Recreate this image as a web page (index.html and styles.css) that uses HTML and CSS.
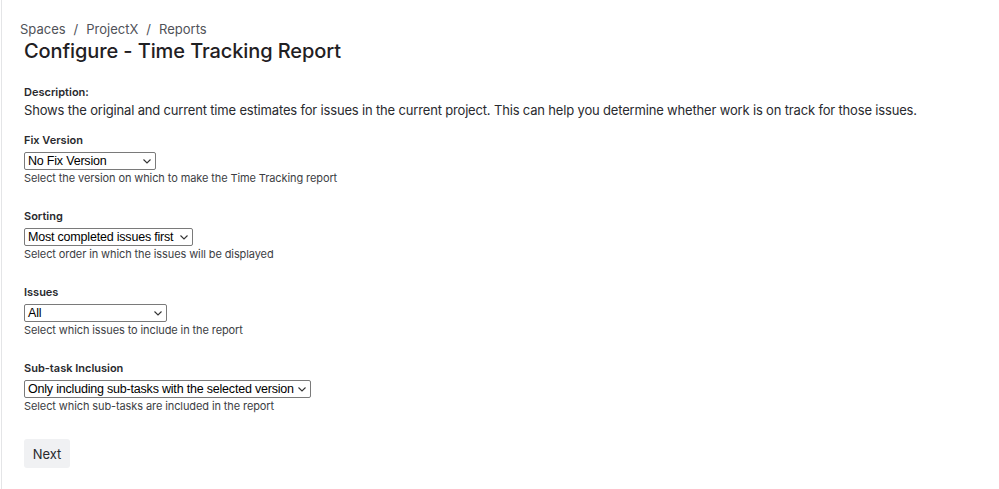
FILE: index.html
```html
<!DOCTYPE html>
<html lang="en">
<head>
<meta charset="utf-8">
<title>Configure - Time Tracking Report</title>
<link rel="stylesheet" href="styles.css">
</head>
<body>
<div class="page">
  <nav class="crumbs">
    <span>Spaces</span><span class="sep">/</span><span>ProjectX</span><span class="sep">/</span><span>Reports</span>
  </nav>
  <h1 class="title">Configure - Time Tracking Report</h1>

  <div class="desc">
    <div class="label">Description:</div>
    <p class="desc-text">Shows the original and current time estimates for issues in the current project. This can help you determine whether work is on track for those issues.</p>
  </div>

  <div class="field">
    <div class="label">Fix Version</div>
    <div class="select w-fix"><span>No Fix Version</span><svg class="chev" viewBox="0 0 8 5"><path d="M0.5 0.5 L4 4 L7.5 0.5"/></svg></div>
    <div class="help">Select the version on which to make the Time Tracking report</div>
  </div>

  <div class="field">
    <div class="label">Sorting</div>
    <div class="select w-sort"><span>Most completed issues first</span><svg class="chev" viewBox="0 0 8 5"><path d="M0.5 0.5 L4 4 L7.5 0.5"/></svg></div>
    <div class="help">Select order in which the issues will be displayed</div>
  </div>

  <div class="field">
    <div class="label">Issues</div>
    <div class="select w-issues"><span>All</span><svg class="chev" viewBox="0 0 8 5"><path d="M0.5 0.5 L4 4 L7.5 0.5"/></svg></div>
    <div class="help">Select which issues to include in the report</div>
  </div>

  <div class="field">
    <div class="label">Sub-task Inclusion</div>
    <div class="select w-sub"><span>Only including sub-tasks with the selected version</span><svg class="chev" viewBox="0 0 8 5"><path d="M0.5 0.5 L4 4 L7.5 0.5"/></svg></div>
    <div class="help">Select which sub-tasks are included in the report</div>
  </div>

  <button class="btn">Next</button>
</div>
</body>
</html>
```
FILE: styles.css
```css
html, body {
  margin: 0;
  padding: 0;
  background: #ffffff;
}
body {
  font-family: Inter, "Noto Sans", sans-serif;
  color: #292a2e;
  height: 489px;
  overflow: hidden;
}
.page {
  margin-left: 1px;
  border-left: 1px solid #e4e5e7;
  min-height: 489px;
  box-sizing: border-box;
  padding: 19px 0 0 22px;
}
.crumbs {
  display: flex;
  gap: 8px;
  font-size: 13px;
  line-height: 20px;
  color: #505258;
  margin-left: -4px;
}
.title {
  margin: -1px 0 0 0;
  font-size: 20px;
  line-height: 26px;
  font-weight: 500;
  color: #1f2023;
  letter-spacing: -0.1px;
}
.desc {
  margin-top: 20px;
}
.label {
  font-size: 11px;
  line-height: 16px;
  font-weight: 600;
  color: #292a2e;
}
.desc-text {
  margin: 0;
  font-size: 13px;
  line-height: 20px;
  letter-spacing: -0.17px;
  white-space: nowrap;
}
.field {
  margin-top: 12px;
  margin-bottom: 10px;
}
.field + .field {
  margin-top: 22px;
}
.select {
  margin-top: 4px;
  height: 18px;
  box-sizing: border-box;
  border: 1px solid #7a7a7a;
  border-radius: 2px;
  display: flex;
  align-items: center;
  justify-content: space-between;
  padding: 0 4px 0 3px;
  font-family: "Liberation Sans", Arial, sans-serif;
  font-size: 12.5px;
  letter-spacing: -0.2px;
  color: #000;
  background: #fff;
}
.select span {
  white-space: nowrap;
  line-height: 16px;
}
.chev {
  width: 8px;
  height: 5px;
  flex: none;
}
.chev path {
  fill: none;
  stroke: #333;
  stroke-width: 1.1;
}
.w-fix { width: 132px; }
.w-sort { width: 169px; }
.w-issues { width: 143px; }
.w-sub { width: 287px; }
.help {
  font-size: 11px;
  line-height: 16px;
  color: #3c3e44;
  letter-spacing: -0.1px;
}
.btn {
  margin-top: 15px;
  width: 46px;
  height: 29px;
  border: none;
  border-radius: 3px;
  background: #f0f1f3;
  font-family: Inter, "Noto Sans", sans-serif;
  font-size: 13px;
  color: #292a2e;
  padding: 0;
}
```
